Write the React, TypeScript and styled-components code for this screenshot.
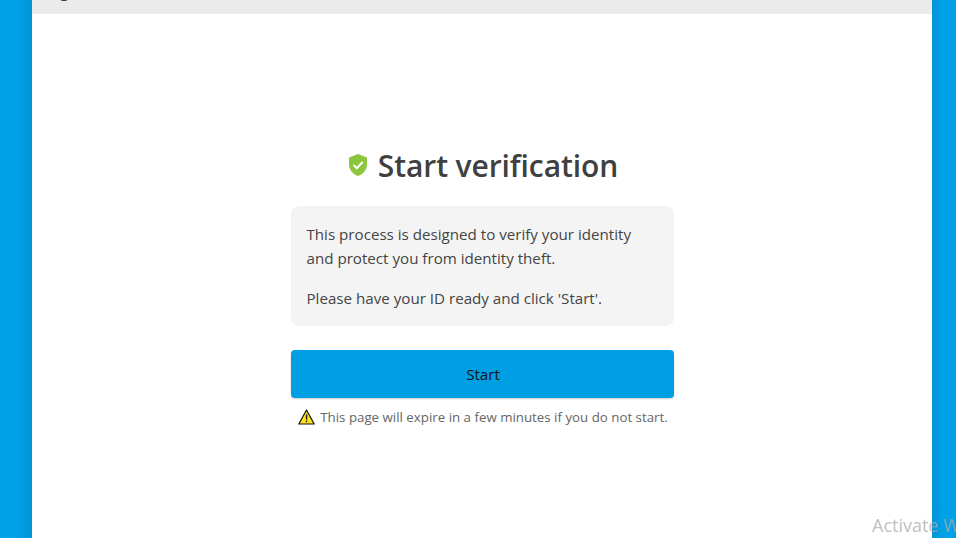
import styled, { createGlobalStyle } from "styled-components";

const GlobalStyle = createGlobalStyle`
  html, body {
    margin: 0;
    height: 100%;
    overflow: hidden;
  }
  #root {
    height: 100%;
  }
`;

const Page = styled.div`
  position: relative;
  display: flex;
  height: 538px;
  width: 956px;
  overflow: hidden;
  background: #009fe3;
  font-family: "Open Sans", "Noto Sans", sans-serif;
`;
const Gutter = styled.div<{ $width: number; $flip?: boolean }>`
  flex: 0 0 ${(p) => p.$width}px;
  background: linear-gradient(
    ${(p) => (p.$flip ? "to left" : "to right")},
    #00a1e6 0%,
    #00a1e6 55%,
    #0095d6 100%
  );
`;
const Sheet = styled.main`
  flex: 1;
  display: flex;
  flex-direction: column;
  background: #fff;
`;
const TopBar = styled.div`
  position: relative;
  height: 14px;
  flex: none;
  background: #ebebeb;
`;
const LogoCrumb = styled.span`
  position: absolute;
  left: 28px;
  top: -3px;
  width: 8px;
  height: 4px;
  border-radius: 50%;
  background: #333;
`;
const Content = styled.div`
  width: 383px;
  margin: 0 auto;
  padding-top: 130px;
  display: flex;
  flex-direction: column;
`;
const Heading = styled.h1`
  margin: 0;
  padding-left: 2px;
  height: 42px;
  display: flex;
  align-items: center;
  justify-content: center;
  gap: 10px;
  color: #404040;
  font-size: 30px;
  font-weight: 600;
  letter-spacing: -0.1px;
  white-space: nowrap;
`;
const InfoCard = styled.div`
  margin-top: 20px;
  padding: 16px;
  height: 120px;
  box-sizing: border-box;
  border-radius: 8px;
  background: #f4f4f4;
  color: #444;
  font-size: 15.15px;
  line-height: 24px;
`;
const InfoText = styled.p`
  margin: 0 0 16px;
`;
const StartButton = styled.button`
  margin-top: 24px;
  padding: 0 0 0 2px;
  height: 48px;
  border: 0;
  border-radius: 4px;
  background: #009fe3;
  box-shadow: 0 1px 2px rgba(0, 0, 0, 0.2);
  color: #111;
  font-family: inherit;
  font-size: 15.15px;
  cursor: pointer;
`;
const ExpiryNote = styled.div`
  margin-top: 9px;
  padding-left: 2px;
  display: flex;
  align-items: center;
  justify-content: center;
  gap: 5px;
  color: #666;
  font-size: 13.3px;
  line-height: 20px;
  white-space: nowrap;
`;
const Watermark = styled.div`
  position: absolute;
  left: 872px;
  top: 513px;
  color: rgba(170, 170, 170, 0.75);
  font-size: 18px;
  line-height: 24px;
  white-space: nowrap;
`;

const ShieldIcon = () => (
  <svg width="20" height="24" viewBox="0 0 20 24">
    <path
      d="M10 1 L19 4.4 V11.5 C19 17 15.2 21 10 23 C4.8 21 1 17 1 11.5 V4.4 Z"
      fill="#8cc63f"
    />
    <path
      d="M5.6 12 L8.8 15.2 L14.6 9"
      fill="none"
      stroke="#fff"
      strokeWidth="2"
    />
  </svg>
);

const WarningIcon = () => (
  <svg width="17" height="16" viewBox="0 0 17 16">
    <path
      d="M8.5 1 L16.2 15 H0.8 Z"
      fill="#ffe11a"
      stroke="#111"
      strokeWidth="1.2"
      strokeLinejoin="round"
    />
    <rect x="7.9" y="5.4" width="1.3" height="5.2" fill="#111" />
    <rect x="7.9" y="11.6" width="1.3" height="1.5" fill="#111" />
  </svg>
);

const App = () => {
  return (
    <Page>
      <GlobalStyle />
      <Gutter $width={32} />
      <Sheet>
        <TopBar>
          <LogoCrumb />
        </TopBar>
        <Content>
          <Heading>
            <ShieldIcon />
            Start verification
          </Heading>
          <InfoCard>
            <InfoText>
              This process is designed to verify your identity and protect you
              from identity theft.
            </InfoText>
            <InfoText>Please have your ID ready and click 'Start'.</InfoText>
          </InfoCard>
          <StartButton>Start</StartButton>
          <ExpiryNote>
            <WarningIcon />
            This page will expire in a few minutes if you do not start.
          </ExpiryNote>
        </Content>
      </Sheet>
      <Gutter $width={24} $flip />
      <Watermark>Activate Windows</Watermark>
    </Page>
  );
};

export default App;
